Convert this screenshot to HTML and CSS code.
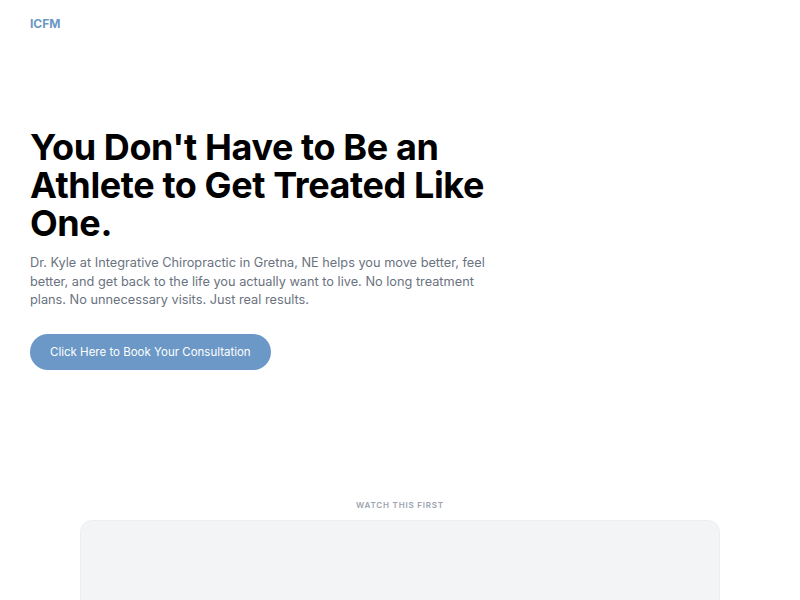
FILE: index.html
```html
<!DOCTYPE html>
<html lang="en">
<head>
    <meta charset="UTF-8">
    <title>ICFM - Integrative Chiropractic</title>
    <link rel="stylesheet" href="styles.css">
</head>
<body>
    <header class="site-header">
        <a href="#" class="logo">ICFM</a>
    </header>

    <section class="hero">
        <h1>You Don't Have to Be an Athlete to Get Treated Like One.</h1>
        <p class="hero-text">Dr. Kyle at Integrative Chiropractic in Gretna, NE helps you move better, feel better, and get back to the life you actually want to live. No long treatment plans. No unnecessary visits. Just real results.</p>
        <a href="#" class="book-button">Click Here to Book Your Consultation</a>
    </section>

    <section class="video-section">
        <p class="eyebrow">WATCH THIS FIRST</p>
        <div class="video-box"></div>
    </section>
</body>
</html>
```

FILE: styles.css
```css
body {
    margin: 0;
    font-family: 'Inter', 'Liberation Sans', sans-serif;
    color: #111;
    background-color: #fff;
}

.site-header {
    padding: 12px 30px 16px;
}

.logo {
    font-size: 12px;
    font-weight: 700;
    color: #6b98c6;
    text-decoration: none;
}

.hero {
    padding: 81px 30px 0;
}

h1 {
    margin: 0;
    max-width: 470px;
    font-size: 36px;
    line-height: 1.05;
    font-weight: 700;
    letter-spacing: -0.4px;
    color: #000;
}

.hero-text {
    margin: 12px 0 0;
    max-width: 465px;
    font-size: 12.75px;
    line-height: 18.5px;
    color: #6b7280;
}

.book-button {
    display: inline-block;
    margin-top: 24px;
    padding: 0 20px;
    height: 36px;
    line-height: 36px;
    border-radius: 18px;
    background-color: #6b98c6;
    color: #fff;
    font-size: 11.5px;
    text-decoration: none;
}

.video-section {
    padding: 130px 80px 0;
}

.eyebrow {
    margin: 0 0 10px;
    text-align: center;
    font-size: 8px;
    font-weight: 600;
    letter-spacing: 0.8px;
    color: #9ca3af;
}

.video-box {
    height: 300px;
    background-color: #f3f4f6;
    border: 1px solid #eceef1;
    border-radius: 12px;
}
```
